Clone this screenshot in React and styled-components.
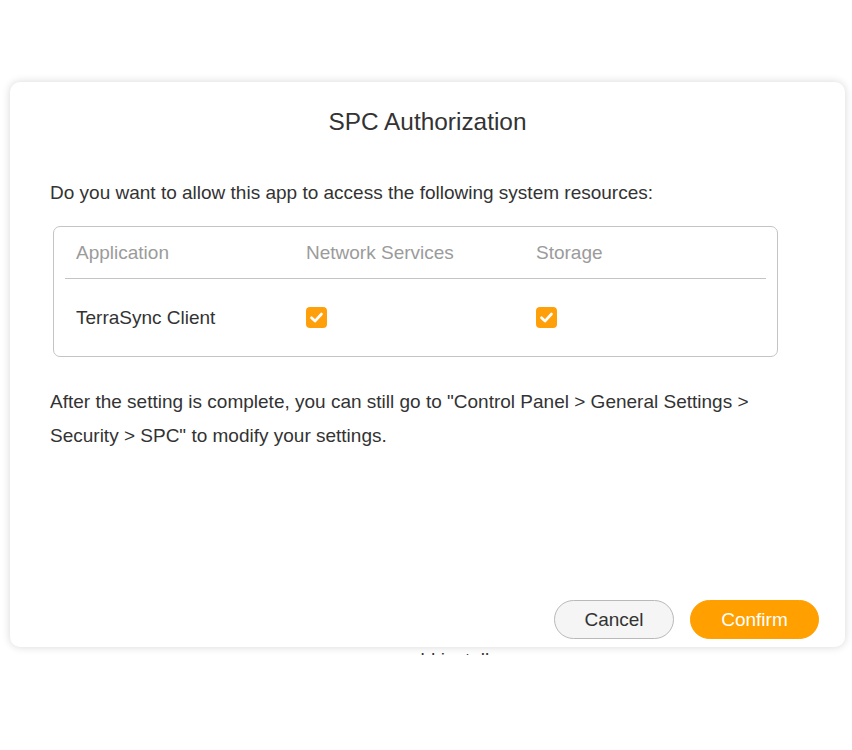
import React from "react";
import styled, { createGlobalStyle } from "styled-components";

const Global = createGlobalStyle`
  html, body { margin: 0; padding: 0; background: #ffffff; }
  body { font-family: "Liberation Sans", Arial, sans-serif; color: #333333; }
  * { box-sizing: border-box; }
`;

const Page = styled.div`
  width: 852px;
  height: 750px;
  padding: 82px 7px 0 10px;
  display: flex;
  flex-direction: column;
  align-items: stretch;
`;

const Dialog = styled.div`
  position: relative;
  z-index: 1;
  height: 565px;
  background: #ffffff;
  border-radius: 10px;
  box-shadow: 0 0 9px rgba(0, 0, 0, 0.16);
  padding: 0 26px 8px 40px;
  display: flex;
  flex-direction: column;
`;

const Title = styled.h1`
  margin: 25px 0 0 -14px;
  font-weight: 400;
  font-size: 24.4px;
  line-height: 30px;
  text-align: center;
  color: #333333;
`;

const Text = styled.p`
  margin: ${(p) => p.$mt || 0}px 0 0;
  font-size: 19px;
  line-height: 34px;
  color: #333333;
`;

const Table = styled.div`
  margin: 16px 0 0 3px;
  width: 725px;
  border: 1px solid #c4c4c4;
  border-radius: 7px;
  padding: 0 11px;
`;

const Row = styled.div`
  display: grid;
  grid-template-columns: 230px 230px 1fr;
  align-items: center;
  height: ${(p) => p.$h}px;
  border-bottom: ${(p) => (p.$line ? "1px solid #c4c4c4" : "none")};
`;

const Cell = styled.div`
  padding-left: 11px;
  font-size: 19px;
  line-height: 24px;
  color: ${(p) => (p.$head ? "#9b9b9b" : "#333333")};
  display: flex;
  align-items: center;
`;

const Check = styled.span`
  width: 21px;
  height: 21px;
  border-radius: 4px;
  background: #ff9f0a;
  display: inline-flex;
  align-items: center;
  justify-content: center;
`;

const Actions = styled.div`
  margin-top: auto;
  display: flex;
  justify-content: flex-end;
  gap: 16px;
`;

const Button = styled.button`
  height: 39px;
  width: ${(p) => p.$w}px;
  border-radius: 20px;
  font-family: "Liberation Sans", Arial, sans-serif;
  font-size: 19px;
  cursor: pointer;
  border: 1px solid ${(p) => (p.$primary ? "#ff9f00" : "#b9b9b9")};
  background: ${(p) => (p.$primary ? "#ff9f00" : "#f5f5f5")};
  color: ${(p) => (p.$primary ? "#ffffff" : "#333333")};
`;

const Peek = styled.div`
  margin-top: 3px;
  height: 5px;
  overflow: hidden;
  text-align: center;
  font-size: 19px;
  line-height: 19px;
  color: #333333;
  padding-left: 20px;
`;

const CheckIcon = () => (
  <svg width="15" height="15" viewBox="0 0 15 15">
    <path d="M2.5 7.8 L6 11.1 L12.5 4" fill="none" stroke="#ffffff" strokeWidth="2.7" strokeLinecap="round" strokeLinejoin="round" />
  </svg>
);

export default function App() {
  return (
    <>
      <Global />
      <Page>
        <Dialog>
          <Title>SPC Authorization</Title>
          <Text $mt={39}>Do you want to allow this app to access the following system resources:</Text>
          <Table>
            <Row $h={52} $line>
              <Cell $head>Application</Cell>
              <Cell $head>Network Services</Cell>
              <Cell $head>Storage</Cell>
            </Row>
            <Row $h={77}>
              <Cell>TerraSync Client</Cell>
              <Cell>
                <Check><CheckIcon /></Check>
              </Cell>
              <Cell>
                <Check><CheckIcon /></Check>
              </Cell>
            </Row>
          </Table>
          <Text $mt={28}>
            After the setting is complete, you can still go to "Control Panel &gt; General Settings &gt; Security &gt; SPC" to modify your settings.
          </Text>
          <Actions>
            <Button $w={120}>Cancel</Button>
            <Button $w={129} $primary>Confirm</Button>
          </Actions>
        </Dialog>
        <Peek>would install</Peek>
      </Page>
    </>
  );
}
